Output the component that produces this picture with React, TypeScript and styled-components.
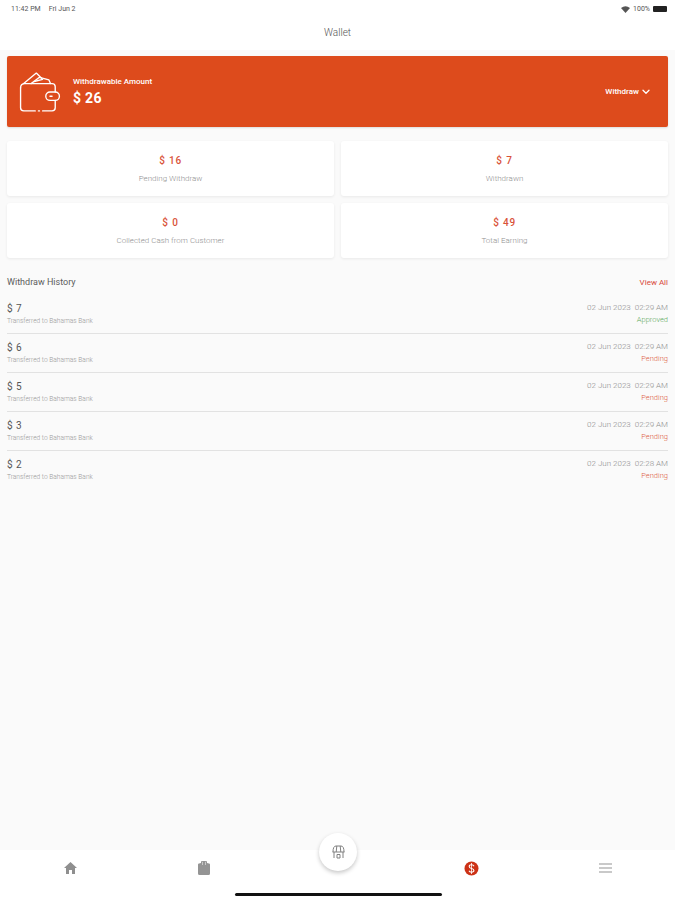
import React from 'react';
import styled, { createGlobalStyle } from 'styled-components';

const GlobalStyle = createGlobalStyle`
  html, body { margin: 0; padding: 0; background: #fafafa; }
  * { box-sizing: border-box; }
`;

const Page = styled.div`
  width: 675px;
  height: 900px;
  display: flex;
  flex-direction: column;
  background: #fafafa;
  font-family: Roboto, "Liberation Sans", sans-serif;
  overflow: hidden;
`;

const TopArea = styled.div`
  background: #fff;
  height: 50px;
  flex: none;
`;

const StatusBar = styled.div`
  height: 16px;
  padding: 2px 8px 0 11px;
  display: flex;
  justify-content: space-between;
  align-items: center;
  font-size: 7px;
  color: #555;
`;

const StatusGroup = styled.div`
  display: flex;
  align-items: center;
  gap: 8px;
`;

const StatusRight = styled(StatusGroup)`
  gap: 3px;
`;

const Battery = styled.div`
  width: 14px;
  height: 6px;
  background: #222;
  border-radius: 1px;
`;

const Title = styled.div`
  margin-top: 10px;
  text-align: center;
  font-size: 10px;
  font-weight: 300;
  line-height: 14px;
  color: #555;
`;

const Content = styled.main`
  flex: 1;
  padding: 6px 7px 0;
`;

const Banner = styled.section`
  height: 71px;
  background: #dd4b1c;
  border-radius: 2px;
  box-shadow: 0 1px 2px rgba(0, 0, 0, 0.12);
  padding: 0 18px 0 12px;
  display: flex;
  align-items: center;
  color: #fff;
`;

const BannerText = styled.div`
  margin-left: 12px;
  flex: 1;
`;

const BannerLabel = styled.div`
  font-size: 8px;
  font-weight: 500;
  line-height: 10px;
`;

const BannerAmount = styled.div`
  margin-top: 3px;
  font-size: 14px;
  font-weight: 700;
  line-height: 17px;
  letter-spacing: 0.3px;
`;

const WithdrawButton = styled.div`
  display: flex;
  align-items: center;
  gap: 3px;
  font-size: 8px;
  font-weight: 500;
`;

const CardGrid = styled.div`
  margin-top: 14px;
  display: grid;
  grid-template-columns: 327px 327px;
  grid-auto-rows: 55px;
  gap: 7px;
`;

const Card = styled.div`
  background: #fff;
  border-radius: 3px;
  box-shadow: 0 1px 3px rgba(0, 0, 0, 0.07);
  display: flex;
  flex-direction: column;
  align-items: center;
  padding-top: 13px;
`;

const CardValue = styled.div`
  font-size: 10px;
  font-weight: 500;
  line-height: 13px;
  letter-spacing: 0.8px;
  color: #d9533a;
`;

const CardLabel = styled.div`
  margin-top: 7px;
  font-size: 8px;
  font-weight: 300;
  line-height: 10px;
  color: #8f8f8f;
`;

const HistoryHeader = styled.div`
  margin-top: 18px;
  display: flex;
  justify-content: space-between;
  align-items: center;
  height: 12px;
`;

const HistoryTitle = styled.div`
  font-size: 9px;
  color: #5c5c5c;
`;

const ViewAll = styled.div`
  font-size: 8px;
  color: #d8483a;
`;

const HistoryList = styled.div`
  margin-top: 7px;
`;

const HistoryRow = styled.div<{ $last: boolean }>`
  height: 39px;
  padding-top: 8px;
  display: flex;
  justify-content: space-between;
  border-bottom: ${(p) => (p.$last ? 'none' : '1px solid #e2e2e2')};
`;

const RowColumn = styled.div<{ $right?: boolean }>`
  display: flex;
  flex-direction: column;
  align-items: ${(p) => (p.$right ? 'flex-end' : 'flex-start')};
`;

const RowAmount = styled.div`
  font-size: 10px;
  line-height: 12px;
  letter-spacing: 0.5px;
  color: #555;
`;

const RowBank = styled.div`
  margin-top: 2px;
  font-size: 6.6px;
  font-weight: 300;
  line-height: 9px;
  color: #999;
`;

const RowDate = styled.div`
  margin-top: -1px;
  font-size: 8px;
  font-weight: 300;
  line-height: 12px;
  color: #8d8d8d;
  white-space: pre;
`;

const RowStatus = styled.div<{ $approved: boolean }>`
  margin-top: 1px;
  font-size: 7.5px;
  font-weight: 300;
  line-height: 10px;
  color: ${(p) => (p.$approved ? '#5aa85a' : '#dc5a42')};
`;

const BottomBar = styled.nav`
  position: relative;
  height: 50px;
  flex: none;
  background: #fff;
  display: grid;
  grid-template-columns: repeat(5, 1fr);
  padding: 0 3px 14px 4px;
`;

const Tab = styled.div`
  display: flex;
  align-items: center;
  justify-content: center;
`;

const FloatingButton = styled.div`
  position: absolute;
  left: 319px;
  top: -17px;
  width: 38px;
  height: 38px;
  border-radius: 50%;
  background: #fff;
  box-shadow: 0 2px 4px rgba(0, 0, 0, 0.22);
  display: flex;
  align-items: center;
  justify-content: center;
`;

const HomeIndicator = styled.div`
  position: absolute;
  left: 235px;
  bottom: 4px;
  width: 207px;
  height: 3px;
  border-radius: 2px;
  background: #111;
`;

const cards = [
  { value: '$ 16', label: 'Pending Withdraw' },
  { value: '$ 7', label: 'Withdrawn' },
  { value: '$ 0', label: 'Collected Cash from Customer' },
  { value: '$ 49', label: 'Total Earning' },
];

const history = [
  { amount: '$ 7', date: '02 Jun 2023  02:29 AM', status: 'Approved' },
  { amount: '$ 6', date: '02 Jun 2023  02:29 AM', status: 'Pending' },
  { amount: '$ 5', date: '02 Jun 2023  02:29 AM', status: 'Pending' },
  { amount: '$ 3', date: '02 Jun 2023  02:29 AM', status: 'Pending' },
  { amount: '$ 2', date: '02 Jun 2023  02:28 AM', status: 'Pending' },
];

const WalletIcon = () => (
  <svg width="42" height="42" viewBox="1.5 1 40 40" fill="none" stroke="#fff" strokeWidth="1.300" strokeLinecap="round" strokeLinejoin="round">
    <path d="M6 13 L18 3 L23 8" />
    <path d="M13 13 L21 7 L30 9.500 L31.500 13" />
    <path d="M16 11 L24 9" />
    <path d="M3 17 Q3 13 7 13 H33 Q36 13 36 16 V21" />
    <path d="M3 17 V36 Q3 39 6 39 H17" />
    <path d="M20 39 H21" />
    <path d="M24 39 H33 Q36 39 36 36 V29" />
    <rect x="27" y="21" width="13" height="8" rx="4" />
    <path d="M31 25 H33" />
  </svg>
);

const WifiIcon = () => (
  <svg width="9" height="7" viewBox="0 0 9 7">
    <path d="M0 2 Q4.500 -1.500 9 2 L4.500 7 Z" fill="#555" />
  </svg>
);

const Chevron = () => (
  <svg width="8" height="6" viewBox="0 0 8 6" fill="none" stroke="#fff" strokeWidth="1.300" strokeLinecap="round" strokeLinejoin="round">
    <path d="M1 1.200 L4 4.200 L7 1.200" />
  </svg>
);

const HomeIcon = () => (
  <svg width="13" height="12" viewBox="0 0 13 12">
    <path d="M6.500 0 L13 6 H11 V12 H8 V8 H5 V12 H2 V6 H0 Z" fill="#8f8f8f" />
  </svg>
);

const BagIcon = () => (
  <svg width="12" height="14" viewBox="0 0 12 14" fill="#949494">
    <path d="M0 3.500 Q0 2.500 1 2.500 L3 2 V1 Q3 0 4 0 H8 Q9 0 9 1 V2 L11 2.500 Q12 2.500 12 3.500 V12.500 Q12 14 10.500 14 H1.500 Q0 14 0 12.500 Z" />
    <path d="M4.500 .8 V4 M7.500 .8 V4" stroke="#fff" strokeWidth=".5" />
  </svg>
);

const StoreIcon = () => (
  <svg width="13" height="14" viewBox="0 0 13 14" fill="none" stroke="#808080" strokeWidth="1">
    <path d="M1 7 Q1 1 4 1 H9 Q12 1 12 7" />
    <path d="M4.800 1 L4.200 7 M8.200 1 L8.800 7" />
    <path d="M.5 7 H12.500" />
    <path d="M2 7 V13 M11 7 V13 M5 9.500 H8 V13 H5 Z" />
  </svg>
);

const DollarIcon = () => (
  <svg width="15" height="15" viewBox="0 0 15 15">
    <circle cx="7.500" cy="7.500" r="7" fill="#cc3216" />
    <path d="M10 5.200 Q9.400 3.800 7.500 3.800 Q5.200 3.800 5.200 5.500 Q5.200 7 7.500 7.500 Q9.900 8 9.900 9.600 Q9.900 11.200 7.500 11.200 Q5.500 11.200 5 9.800" fill="none" stroke="#fff" strokeWidth="1.100" />
    <path d="M7.500 2 V13" stroke="#fff" strokeWidth=".8" />
  </svg>
);

const MenuIcon = () => (
  <svg width="13" height="10" viewBox="0 0 13 10" fill="none" stroke="#949494" strokeWidth="1.200">
    <path d="M0 1 H13 M0 5 H13 M0 9 H13" />
  </svg>
);

const App = () => {
  return (
    <Page>
      <GlobalStyle />
      <TopArea>
        <StatusBar>
          <StatusGroup>
            <span>11:42 PM</span>
            <span>Fri Jun 2</span>
          </StatusGroup>
          <StatusRight>
            <WifiIcon />
            <span>100%</span>
            <Battery />
          </StatusRight>
        </StatusBar>
        <Title>Wallet</Title>
      </TopArea>
      <Content>
        <Banner>
          <WalletIcon />
          <BannerText>
            <BannerLabel>Withdrawable Amount</BannerLabel>
            <BannerAmount>$ 26</BannerAmount>
          </BannerText>
          <WithdrawButton>
            Withdraw
            <Chevron />
          </WithdrawButton>
        </Banner>
        <CardGrid>
          {cards.map((c) => (
            <Card key={c.label}>
              <CardValue>{c.value}</CardValue>
              <CardLabel>{c.label}</CardLabel>
            </Card>
          ))}
        </CardGrid>
        <HistoryHeader>
          <HistoryTitle>Withdraw History</HistoryTitle>
          <ViewAll>View All</ViewAll>
        </HistoryHeader>
        <HistoryList>
          {history.map((h, i) => (
            <HistoryRow key={h.amount} $last={i === history.length - 1}>
              <RowColumn>
                <RowAmount>{h.amount}</RowAmount>
                <RowBank>Transferred to Bahamas Bank</RowBank>
              </RowColumn>
              <RowColumn $right>
                <RowDate>{h.date}</RowDate>
                <RowStatus $approved={h.status === 'Approved'}>{h.status}</RowStatus>
              </RowColumn>
            </HistoryRow>
          ))}
        </HistoryList>
      </Content>
      <BottomBar>
        <Tab><HomeIcon /></Tab>
        <Tab><BagIcon /></Tab>
        <Tab />
        <Tab><DollarIcon /></Tab>
        <Tab><MenuIcon /></Tab>
        <FloatingButton><StoreIcon /></FloatingButton>
        <HomeIndicator />
      </BottomBar>
    </Page>
  );
};

export default App;
